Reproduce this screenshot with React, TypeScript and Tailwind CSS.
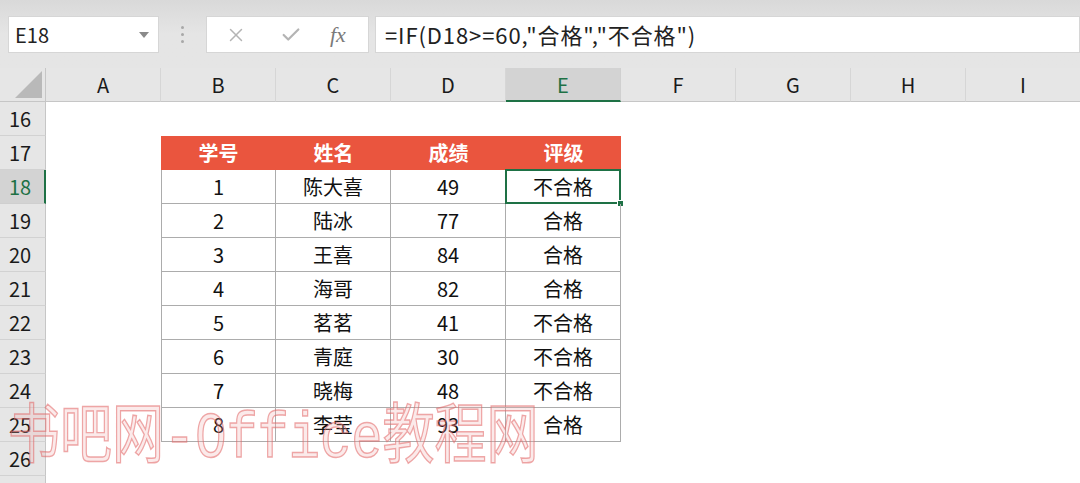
import { X, Check } from "lucide-react";

const cols = ["A", "B", "C", "D", "E", "F", "G", "H", "I"];
const rows = [16, 17, 18, 19, 20, 21, 22, 23, 24, 25, 26, 27];

const head = ["学号", "姓名", "成绩", "评级"];
const data = [
  ["1", "陈大喜", "49", "不合格"],
  ["2", "陆冰", "77", "合格"],
  ["3", "王喜", "84", "合格"],
  ["4", "海哥", "82", "合格"],
  ["5", "茗茗", "41", "不合格"],
  ["6", "青庭", "30", "不合格"],
  ["7", "晓梅", "48", "不合格"],
  ["8", "李莹", "93", "合格"],
];

const font = "font-['Noto_Sans_CJK_SC','Noto_Sans',sans-serif]";

function Cell({ row, col }: { row: number; col: number }) {
  // col: 0 = A ... table sits in B..E (1..4), rows 17..25
  const inTable = col >= 1 && col <= 4 && row >= 17 && row <= 25;
  const selected = row === 18 && col === 4;
  if (!inTable) return <div className="h-[34px] bg-white" />;
  const isHead = row === 17;
  const text = isHead ? head[col - 1] : data[row - 18][col - 1];
  return (
    <div
      className={
        "relative flex h-[34px] items-center justify-center text-[20px] " +
        (isHead
          ? "bg-[#ea553e] font-bold text-white"
          : "border-b border-r border-[#acacac] text-[#111] ") +
        (!isHead && col === 1 ? " border-l" : "")
      }
    >
      {text}
      {selected && (
        <>
          <div className="absolute -left-px -top-px -bottom-px -right-px border-2 border-[#1e7145]" />
          <div className="absolute -bottom-[4px] -right-[4px] h-[7px] w-[7px] border border-white bg-[#1e7145]" />
        </>
      )}
    </div>
  );
}

export default function App() {
  return (
    <div className={"relative h-[483px] w-[1080px] overflow-hidden bg-white " + font}>
      {/* formula bar */}
      <div className="flex h-[68px] items-start bg-gradient-to-b from-[#d9d9d9] via-[#e5e5e5] to-[#e5e5e5] pl-[8px] pt-[16px]">
        <div className="flex h-[37px] w-[151px] items-center justify-between border border-[#d6d6d6] bg-white pl-[6px] pr-[9px]">
          <span className="text-[20px] text-[#222]">E18</span>
          <span className="h-0 w-0 border-x-[5px] border-t-[6px] border-x-transparent border-t-[#8a8a8a]" />
        </div>
        <div className="flex h-[37px] w-[47px] flex-col items-center justify-center gap-[4px]">
          <span className="h-[3px] w-[3px] rounded-full bg-[#a8a8a8]" />
          <span className="h-[3px] w-[3px] rounded-full bg-[#a8a8a8]" />
          <span className="h-[3px] w-[3px] rounded-full bg-[#a8a8a8]" />
        </div>
        <div className="flex h-[37px] w-[163px] items-center border border-[#d6d6d6] bg-white">
          <X className="ml-[18px] h-[22px] w-[22px] text-[#b4b4b4]" strokeWidth={1.6} />
          <Check className="ml-[33px] h-[22px] w-[22px] text-[#b4b4b4]" strokeWidth={2.4} />
          <span className="ml-[28px] font-['Liberation_Serif',serif] text-[22px] italic text-[#7a7a7a]">fx</span>
        </div>
        <div className="ml-[6px] flex h-[37px] flex-1 items-center border border-[#d6d6d6] bg-white pl-[9px]">
          <span className="whitespace-nowrap text-[22px] tracking-[0.9px] text-[#222]">
            =IF(D18&gt;=60,"合格","不合格")
          </span>
        </div>
      </div>

      {/* sheet */}
      <div className="grid grid-cols-[46px_repeat(9,115px)]">
        <div className="relative h-[34px] border-b border-r border-[#c6c6c6] bg-[#e6e6e6]">
          <div className="absolute bottom-[3px] right-[3px] h-0 w-0 border-b-[27px] border-l-[27px] border-b-[#b9b9b9] border-l-transparent" />
        </div>
        {cols.map((c) =>
          c === "E" ? (
            <div
              key={c}
              className="flex h-[34px] items-center justify-center border-b-2 border-r border-b-[#1e7145] border-r-[#d0d0d0] bg-[#d3d3d3] pt-[2px] text-[20px] text-[#1e7145]"
            >
              {c}
            </div>
          ) : (
            <div
              key={c}
              className="flex h-[34px] items-center justify-center border-b border-r border-b-[#c6c6c6] border-r-[#d6d6d6] bg-[#e6e6e6] text-[20px] text-[#1a1a1a]"
            >
              {c}
            </div>
          )
        )}
        {rows.map((r) => (
          <div key={r} className="contents">
            <div
              className={
                "flex h-[34px] items-center pl-[9px] text-[20px] " +
                (r === 18
                  ? "border-b border-r-2 border-b-[#cfcfcf] border-r-[#1e7145] bg-[#d3d3d3] text-[#1e7145]"
                  : "border-b border-r border-b-[#d2d2d2] border-r-[#c6c6c6] bg-[#e6e6e6] text-[#1a1a1a]")
              }
            >
              {r}
            </div>
            {cols.map((_, i) => (
              <Cell key={i} row={r} col={i} />
            ))}
          </div>
        ))}
      </div>

      {/* watermark */}
      <div className="pointer-events-none absolute left-[8px] top-[409px] origin-top scale-y-[1.24] whitespace-nowrap font-['Liberation_Mono','Noto_Sans_CJK_SC',monospace] text-[52px] leading-none text-[rgba(240,170,170,0.25)] [-webkit-text-stroke:1.2px_rgba(226,100,100,0.55)]">
        书吧网-Office教程网
      </div>
    </div>
  );
}
